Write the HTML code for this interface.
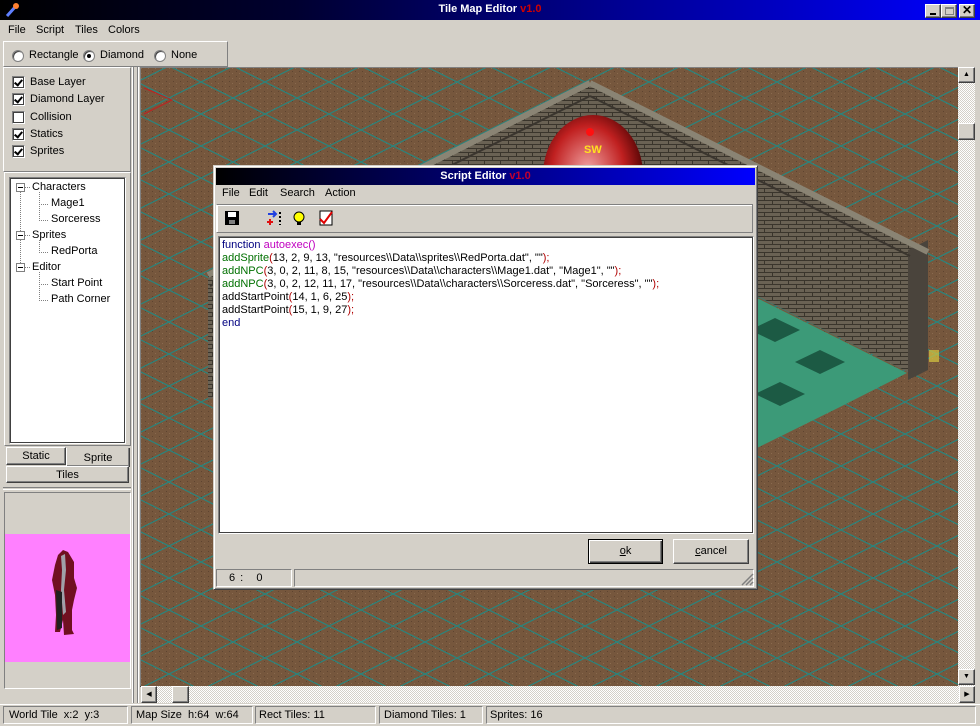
<!DOCTYPE html>
<html><head><meta charset="utf-8"><style>
*{box-sizing:border-box;margin:0;padding:0}
body{width:980px;height:726px;background:#d4d0c8;font-family:"Liberation Sans",Tahoma,sans-serif;font-size:11px;color:#000;position:relative;overflow:hidden}
.a{position:absolute}
.sunk{border:1px solid;border-color:#808080 #fff #fff #808080}
.rais{border:1px solid;border-color:#fff #404040 #404040 #fff;box-shadow:inset -1px -1px #808080}
.cb{position:absolute;width:13px;height:13px;background:#fff;border:2px solid;border-color:#808080 #fff #fff #808080;outline:1px solid #404040;outline-offset:-2px}
.cb.k::after{content:"";position:absolute;left:2px;top:0px;width:3px;height:6px;border:solid #000;border-width:0 2px 2px 0;transform:rotate(40deg)}
.rd{position:absolute;width:12px;height:12px;border-radius:50%;background:#fff;border:1px solid #808080;box-shadow:inset 1px 1px #404040}
.rd.k::after{content:"";position:absolute;left:3px;top:3px;width:4px;height:4px;border-radius:50%;background:#000}
.code div{height:13px;line-height:13px;white-space:pre}
.g{color:#007000}.r{color:#b00000}.b{color:#000080}.m{color:#c000c0}
</style></head><body>
<!-- title -->
<div class="a" style="left:0;top:0;width:980px;height:20px;background:linear-gradient(90deg,#000 0%,#000030 30%,#0000ff 100%)"></div>
<div class="a" style="left:4px;top:2px;width:16px;height:16px"><svg width="16" height="16"><line x1="3" y1="14" x2="12" y2="4" stroke="#6080ff" stroke-width="3"/><circle cx="12" cy="4" r="3" fill="#ff8030"/></svg></div>
<div class="a" style="left:0;top:3px;width:980px;text-align:center;color:#fff;font-weight:bold;font-size:11px">Tile Map Editor <span style="color:#d00000">v1.0</span></div>
<div class="a rais" style="left:925px;top:4px;width:16px;height:14px;background:#d4d0c8"><div class="a" style="left:4px;top:8px;width:6px;height:2px;background:#000"></div></div>
<div class="a rais" style="left:941px;top:4px;width:16px;height:14px;background:#d4d0c8"><div class="a" style="left:3px;top:2px;width:9px;height:8px;border:1px solid #808080;border-top-width:2px"></div></div>
<div class="a rais" style="left:959px;top:4px;width:16px;height:14px;background:#d4d0c8;font-weight:bold;font-size:12px;line-height:11px;text-align:center">✕</div>
<!-- menu -->
<div class="a" style="left:8px;top:24px">File</div>
<div class="a" style="left:36px;top:24px">Script</div>
<div class="a" style="left:75px;top:24px">Tiles</div>
<div class="a" style="left:108px;top:24px">Colors</div>
<!-- radio group -->
<div class="a" style="left:3px;top:41px;width:225px;height:26px;border:1px solid;border-color:#fff #808080 #808080 #fff"></div>
<div class="rd" style="left:12px;top:50px"></div><div class="a" style="left:29px;top:49px">Rectangle</div>
<div class="rd k" style="left:83px;top:50px"></div><div class="a" style="left:100px;top:49px">Diamond</div>
<div class="rd" style="left:154px;top:50px"></div><div class="a" style="left:171px;top:49px">None</div>
<!-- checkboxes panel -->
<div class="a" style="left:3px;top:67px;width:128px;height:105px;border:1px solid;border-color:#fff #808080 #808080 #fff"></div>
<div class="cb k" style="left:12px;top:76px"></div><div class="a" style="left:30px;top:76px">Base Layer</div>
<div class="cb k" style="left:12px;top:93px"></div><div class="a" style="left:30px;top:93px">Diamond Layer</div>
<div class="cb" style="left:12px;top:111px"></div><div class="a" style="left:30px;top:111px">Collision</div>
<div class="cb k" style="left:12px;top:128px"></div><div class="a" style="left:30px;top:128px">Statics</div>
<div class="cb k" style="left:12px;top:145px"></div><div class="a" style="left:30px;top:145px">Sprites</div>
<!-- tree -->
<div class="a" style="left:4px;top:172px;width:127px;height:274px;border:1px solid;border-color:#fff #808080 #808080 #fff"></div>
<div class="a" style="left:9px;top:177px;width:117px;height:267px;background:#fff;border:2px solid;border-color:#808080 #fff #fff #808080;outline:1px solid #404040;outline-offset:-2px"></div>
<svg class="a" style="left:10px;top:178px" width="110" height="130">
<g stroke="#808080" stroke-dasharray="1 1" fill="none">
<line x1="10.5" y1="14" x2="10.5" y2="90"/>
<line x1="29.5" y1="14" x2="29.5" y2="42"/><line x1="29" y1="26.5" x2="38" y2="26.5"/><line x1="29" y1="42.5" x2="38" y2="42.5"/>
<line x1="29.5" y1="62" x2="29.5" y2="74"/><line x1="29" y1="74.5" x2="38" y2="74.5"/>
<line x1="29.5" y1="94" x2="29.5" y2="122"/><line x1="29" y1="106.5" x2="38" y2="106.5"/><line x1="29" y1="122.5" x2="38" y2="122.5"/>
<line x1="15" y1="9.5" x2="20" y2="9.5"/><line x1="15" y1="57.5" x2="20" y2="57.5"/><line x1="15" y1="89.5" x2="20" y2="89.5"/>
</g>
<g fill="#fff" stroke="#808080"><rect x="6.5" y="5.5" width="8" height="8"/><rect x="6.5" y="53.5" width="8" height="8"/><rect x="6.5" y="85.5" width="8" height="8"/></g>
<g stroke="#000"><line x1="8" y1="9.5" x2="13" y2="9.5"/><line x1="8" y1="57.5" x2="13" y2="57.5"/><line x1="8" y1="89.5" x2="13" y2="89.5"/></g>
</svg>
<div class="a" style="left:32px;top:181px">Characters</div>
<div class="a" style="left:51px;top:197px">Mage1</div>
<div class="a" style="left:51px;top:213px">Sorceress</div>
<div class="a" style="left:32px;top:229px">Sprites</div>
<div class="a" style="left:51px;top:245px">RedPorta</div>
<div class="a" style="left:32px;top:261px">Editor</div>
<div class="a" style="left:51px;top:277px">Start Point</div>
<div class="a" style="left:51px;top:293px">Path Corner</div>
<!-- tabs -->
<div class="a rais" style="left:6px;top:447px;width:60px;height:18px;text-align:center;line-height:16px;background:#d4d0c8">Static</div>
<div class="a rais" style="left:66px;top:448px;width:64px;height:19px;text-align:center;line-height:20px;background:#d4d0c8;border-top:none">Sprite</div>
<div class="a rais" style="left:6px;top:466px;width:123px;height:17px;text-align:center;line-height:16px;background:#d4d0c8">Tiles</div>
<div class="a" style="left:3px;top:487px;width:128px;height:3px;border-top:1px solid #808080;border-bottom:1px solid #fff"></div>
<div class="a sunk" style="left:4px;top:492px;width:127px;height:197px"></div>
<div class="a" style="left:5px;top:534px;width:125px;height:128px;background:#ff80ff"></div>
<svg class="a" style="left:50px;top:550px" width="30" height="95">
<path d="M8 5 L13 0 L18 2 L24 12 L24 28 L27 38 L24 50 L22 60 L22 80 L24 84 L14 85 L13 70 L10 82 L5 82 L6 65 L5 45 L2 30 L5 15Z" fill="#701020"/>
<path d="M11 6 L15 4 L16 20 L14 40 L16 62 L13 65 L11 40 L12 20Z" fill="#a0a0a8"/>
<path d="M6 40 L12 42 L12 78 L7 80Z" fill="#202020"/>
</svg>
<!-- splitter -->
<div class="a" style="left:132px;top:67px;width:2px;height:636px;border-left:1px solid #fff;border-right:1px solid #808080"></div>
<div class="a" style="left:137px;top:67px;width:2px;height:636px;border-left:1px solid #808080;border-right:1px solid #fff"></div>
<!-- map -->
<div class="a" style="left:140px;top:67px;width:820px;height:620px;border:1px solid;border-color:#808080 #000 #000 #808080;overflow:hidden;background:#76573d">
<svg width="820" height="620" style="position:absolute;left:0;top:0">
<defs>
<pattern id="dirt" width="7" height="5" patternUnits="userSpaceOnUse"><rect width="7" height="5" fill="#76573d"/><rect x="0" y="0" width="1" height="1" fill="#8a6a4e"/><rect x="4" y="3" width="1" height="1" fill="#5e4430"/></pattern>
<pattern id="grid" width="64" height="32" patternUnits="userSpaceOnUse" x="-4" y="-2"><path d="M0 16 L32 0 L64 16 L32 32 Z" fill="none" stroke="#268680" stroke-width="1.2"/></pattern>
<pattern id="brick" width="16" height="8" patternUnits="userSpaceOnUse"><rect width="16" height="8" fill="#6a6254"/><path d="M0 0.5H16M0 4.5H16M4.5 0V4M12.5 4V8" stroke="#3a352c" stroke-width="1"/></pattern>
<radialGradient id="dome" cx="0.45" cy="0.45" r="0.6"><stop offset="0" stop-color="#f0a0a0"/><stop offset="0.6" stop-color="#c02020"/><stop offset="1" stop-color="#400000"/></radialGradient>
</defs>
<rect width="820" height="620" fill="url(#dirt)"/>
<rect width="820" height="620" fill="url(#grid)"/>
<g transform="translate(-141,-68)">
<polygon points="757,298 907,373 840,407 757,448" fill="#3c9a78"/>
<polygon points="775,318 800,330 775,342 750,330" fill="#1c5a44"/><polygon points="820,350 845,362 820,374 795,362" fill="#1c5a44"/><polygon points="780,382 805,394 780,406 755,394" fill="#1c5a44"/>
<polygon points="590,83 208,275 208,400 235,390 590,200" fill="url(#brick)"/>
<polygon points="590,83 928,252 928,370 908,372 590,212" fill="url(#brick)"/>
<polygon points="908,250 928,240 928,370 908,380" fill="#4a443c"/>
<path d="M590 83 L208 275 M590 83 L928 252" stroke="#8a8474" stroke-width="6" fill="none"/>
<path d="M590 96 L210 286 M590 96 L910 256" stroke="#3a352e" stroke-width="2" fill="none"/>
<ellipse cx="593" cy="175" rx="50" ry="60" fill="url(#dome)"/>
<circle cx="590" cy="132" r="4" fill="#ff1010"/>
<text x="584" y="153" fill="#ffe020" font-family="Liberation Sans" font-weight="bold" font-size="11">SW</text>
<path d="M144 88 L172 100 L144 114" stroke="#c02020" fill="none"/>
<rect x="929" y="350" width="10" height="12" fill="#d8c840" opacity="0.7"/>
</g>
</svg>
</div>
<!-- scrollbars -->
<div class="a" style="left:958px;top:67px;width:17px;height:620px;background:repeating-conic-gradient(#d4d0c8 0 25%,#fff 0 50%) 0 0/2px 2px"></div>
<div class="a rais" style="left:958px;top:67px;width:17px;height:16px;background:#d4d0c8;font-size:7px;text-align:center;line-height:14px">▲</div>
<div class="a rais" style="left:958px;top:123px;width:17px;height:17px;background:#d4d0c8"></div>
<div class="a rais" style="left:958px;top:669px;width:17px;height:16px;background:#d4d0c8;font-size:7px;text-align:center;line-height:14px">▼</div>
<div class="a" style="left:141px;top:686px;width:834px;height:17px;background:repeating-conic-gradient(#d4d0c8 0 25%,#fff 0 50%) 0 0/2px 2px"></div>
<div class="a rais" style="left:141px;top:686px;width:16px;height:17px;background:#d4d0c8;font-size:7px;text-align:center;line-height:15px">◀</div>
<div class="a rais" style="left:172px;top:686px;width:17px;height:17px;background:#d4d0c8"></div>
<div class="a rais" style="left:959px;top:686px;width:16px;height:17px;background:#d4d0c8;font-size:7px;text-align:center;line-height:15px">▶</div>
<!-- status -->
<div class="a" style="left:0;top:704px;width:980px;height:1px;background:#fff"></div>
<div class="a sunk" style="left:3px;top:706px;width:125px;height:18px;padding:2px 5px">World Tile &nbsp;x:2 &nbsp;y:3</div>
<div class="a sunk" style="left:131px;top:706px;width:122px;height:18px;padding:2px 4px">Map Size &nbsp;h:64 &nbsp;w:64</div>
<div class="a sunk" style="left:255px;top:706px;width:121px;height:18px;padding:2px 3px">Rect Tiles: 11</div>
<div class="a sunk" style="left:379px;top:706px;width:104px;height:18px;padding:2px 4px">Diamond Tiles: 1</div>
<div class="a sunk" style="left:486px;top:706px;width:490px;height:18px;padding:2px 3px">Sprites: 16</div>
<!-- dialog -->
<div class="a" style="left:213px;top:165px;width:545px;height:425px;background:#d4d0c8;border:1px solid;border-color:#d4d0c8 #404040 #404040 #d4d0c8;box-shadow:inset 1px 1px #fff,inset -1px -1px #808080"></div>
<div class="a" style="left:216px;top:168px;width:539px;height:17px;background:linear-gradient(90deg,#000 0%,#000060 40%,#0000ff 100%)"></div>
<div class="a" style="left:216px;top:170px;width:539px;text-align:center;color:#fff;font-weight:bold">Script Editor <span style="color:#c00030">v1.0</span></div>
<div class="a" style="left:222px;top:187px">File</div>
<div class="a" style="left:249px;top:187px">Edit</div>
<div class="a" style="left:280px;top:187px">Search</div>
<div class="a" style="left:325px;top:187px">Action</div>
<div class="a" style="left:216px;top:204px;width:537px;height:29px;border:1px solid;border-color:#808080 #808080 #808080 #fff;box-shadow:inset 1px 1px #fff"></div>
<svg class="a" style="left:224px;top:209px" width="120" height="18">
<rect x="1" y="2" width="14" height="14" fill="#000"/><rect x="4" y="3" width="8" height="5" fill="#fff"/><rect x="5" y="11" width="6" height="4" fill="#808080"/>
<path d="M44 5 H52 M49 2 L52 5 L49 8" stroke="#2040e0" stroke-width="2" fill="none"/><path d="M46 10 V16 M43 13 H49" stroke="#e01010" stroke-width="2"/><path d="M56 3 V16" stroke="#000" stroke-width="2" stroke-dasharray="2 2"/>
<circle cx="75" cy="8" r="5" fill="#ffff00" stroke="#000"/><rect x="73" y="13" width="4" height="3" fill="#000"/>
<rect x="96" y="2" width="12" height="14" fill="#fff" stroke="#000"/><path d="M96 10 L100 14 L108 3" stroke="#e00000" stroke-width="2" fill="none"/>
</svg>
<div class="a" style="left:218px;top:236px;width:536px;height:298px;background:#fff;border:2px solid;border-color:#808080 #fff #fff #808080;outline:1px solid #404040;outline-offset:-2px"></div>
<div class="a code" style="left:222px;top:239px;font-size:11px;letter-spacing:0">
<div><span class="b">function </span><span class="m">autoexec()</span></div>
<div><span class="g">addSprite</span><span class="r">(</span>13, 2, 9, 13, "resources\\Data\\sprites\\RedPorta.dat", ""<span class="r">);</span></div>
<div><span class="g">addNPC</span><span class="r">(</span>3, 0, 2, 11, 8, 15, "resources\\Data\\characters\\Mage1.dat", "Mage1", ""<span class="r">);</span></div>
<div><span class="g">addNPC</span><span class="r">(</span>3, 0, 2, 12, 11, 17, "resources\\Data\\characters\\Sorceress.dat", "Sorceress", ""<span class="r">);</span></div>
<div>addStartPoint<span class="r">(</span>14, 1, 6, 25<span class="r">);</span></div>
<div>addStartPoint<span class="r">(</span>15, 1, 9, 27<span class="r">);</span></div>
<div class="b">end</div>
</div>
<div class="a" style="left:588px;top:539px;width:75px;height:25px;border:1px solid #000;background:#d4d0c8;box-shadow:inset 1px 1px #fff,inset -1px -1px #404040,inset -2px -2px #808080;text-align:center;line-height:22px"><u>o</u>k</div>
<div class="a rais" style="left:673px;top:539px;width:76px;height:25px;background:#d4d0c8;text-align:center;line-height:22px"><u>c</u>ancel</div>
<div class="a sunk" style="left:216px;top:569px;width:76px;height:18px;padding:2px 12px;letter-spacing:1px">6 : &nbsp; 0</div>
<div class="a sunk" style="left:294px;top:569px;width:460px;height:18px"></div>
<svg class="a" style="left:741px;top:573px" width="13" height="13"><path d="M12 1 L1 12 M12 5 L5 12 M12 9 L9 12" stroke="#808080" stroke-width="1.5"/></svg>
</body></html>
